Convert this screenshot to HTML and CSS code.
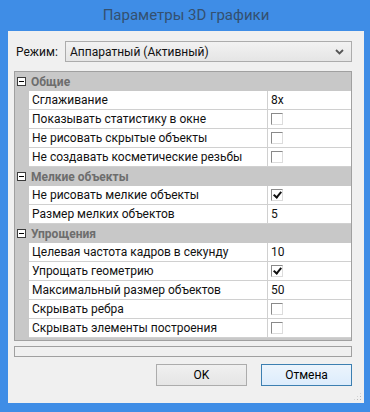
FILE: index.html
```html
<!DOCTYPE html>
<html lang="ru">
<head>
    <meta charset="UTF-8">
    <meta name="viewport" content="width=device-width, initial-scale=1.0">
    <title>Параметры 3D графики</title>
    <link rel="stylesheet" href="styles.css">
</head>
<body>
    <div class="window">
        <div class="title-bar">Параметры 3D графики</div>
        <div class="client">
            <div class="mode-row">
                <label class="mode-label" for="mode">Режим:</label>
                <div class="combo" id="mode">
                    <span>Аппаратный (Активный)</span>
                    <svg class="combo-arrow" width="9" height="6" viewBox="0 0 9 6">
                        <path d="M1 1 L4.5 4.5 L8 1" fill="none" stroke="#555" stroke-width="1.8"/>
                    </svg>
                </div>
            </div>

            <div class="prop-grid">
                <div class="pg-cat"><span class="toggle"></span><span class="cat-name">Общие</span></div>
                <div class="pg-row"><span class="pg-name">Сглаживание</span><span class="pg-value">8x</span></div>
                <div class="pg-row"><span class="pg-name">Показывать статистику в окне</span><span class="pg-value"><span class="check"></span></span></div>
                <div class="pg-row"><span class="pg-name">Не рисовать скрытые объекты</span><span class="pg-value"><span class="check"></span></span></div>
                <div class="pg-row"><span class="pg-name">Не создавать косметические резьбы</span><span class="pg-value"><span class="check"></span></span></div>

                <div class="pg-cat"><span class="toggle"></span><span class="cat-name">Мелкие объекты</span></div>
                <div class="pg-row"><span class="pg-name">Не рисовать мелкие объекты</span><span class="pg-value"><span class="check checked"></span></span></div>
                <div class="pg-row"><span class="pg-name">Размер мелких объектов</span><span class="pg-value">5</span></div>

                <div class="pg-cat"><span class="toggle"></span><span class="cat-name">Упрощения</span></div>
                <div class="pg-row"><span class="pg-name">Целевая частота кадров в секунду</span><span class="pg-value">10</span></div>
                <div class="pg-row"><span class="pg-name">Упрощать геометрию</span><span class="pg-value"><span class="check checked"></span></span></div>
                <div class="pg-row"><span class="pg-name">Максимальный размер объектов</span><span class="pg-value">50</span></div>
                <div class="pg-row"><span class="pg-name">Скрывать ребра</span><span class="pg-value"><span class="check"></span></span></div>
                <div class="pg-row"><span class="pg-name">Скрывать элементы построения</span><span class="pg-value"><span class="check"></span></span></div>
                <div class="pg-rest"></div>
            </div>

            <div class="help-box"></div>

            <div class="buttons">
                <button class="btn">OK</button>
                <button class="btn btn-default">Отмена</button>
            </div>
            <div class="grip"></div>
        </div>
    </div>
</body>
</html>
```

FILE: styles.css
```css
* { box-sizing: border-box; }
body {
    margin: 0;
    font-family: Roboto, "Noto Sans", sans-serif;
    font-size: 12px;
    color: #111;
}
.window {
    width: 370px;
    height: 412px;
    background: #3f8de6;
    padding: 0 6px 9px 8px;
    display: flex;
    flex-direction: column;
}
.title-bar {
    height: 31px;
    line-height: 31px;
    text-align: center;
    font-size: 15px;
    color: #34506f;
}
.client {
    flex: 1;
    background: #f0f0f0;
    padding: 10px 12px 0 6px;
    position: relative;
}
.mode-row {
    display: flex;
    align-items: center;
    height: 21px;
}
.mode-label {
    width: 51px;
    padding-left: 2px;
}
.combo {
    flex: 1;
    height: 21px;
    border: 1px solid #acacac;
    background: linear-gradient(#f2f2f2, #e5e5e5);
    display: flex;
    align-items: center;
    justify-content: space-between;
    padding: 0 7px 0 4px;
}
.prop-grid {
    margin-top: 9px;
    border: 1px solid #a0a0a0;
    height: 270px;
    background: #c8c8c8;
    display: flex;
    flex-direction: column;
}
.pg-cat {
    height: 19px;
    display: flex;
    align-items: center;
    background: #c8c8c8;
}
.toggle {
    width: 9px;
    height: 9px;
    margin: 0 5px 0 2px;
    border: 1px solid #3c3c3c;
    background: #fff;
    position: relative;
}
.toggle::after {
    content: "";
    position: absolute;
    left: 1px;
    right: 1px;
    top: 3px;
    height: 1px;
    background: #000;
}
.cat-name {
    font-weight: bold;
    color: #6d6d6d;
}
.pg-row {
    height: 19px;
    margin-left: 14px;
    display: flex;
    background: #fff;
    border-bottom: 1px solid #d0d0d0;
}
.pg-name {
    width: 239px;
    padding-left: 3px;
    border-right: 1px solid #d0d0d0;
    line-height: 18px;
    white-space: nowrap;
    overflow: hidden;
}
.pg-value {
    flex: 1;
    padding-left: 3px;
    line-height: 18px;
    display: flex;
    align-items: center;
}
.pg-rest {
    flex: 1;
}
.check {
    width: 12px;
    height: 12px;
    border-top: 1px solid #8a8a8a;
    border-left: 1px solid #8a8a8a;
    border-right: 1px solid #dcdcdc;
    border-bottom: 1px solid #dcdcdc;
    background: #fff;
    position: relative;
}
.check.checked::after {
    content: "";
    position: absolute;
    left: 3px;
    top: 0;
    width: 3px;
    height: 6px;
    border-right: 2px solid #111;
    border-bottom: 2px solid #111;
    transform: rotate(40deg);
}
.help-box {
    margin-top: 5px;
    height: 11px;
    border: 1px solid #a0a0a0;
    background: #f0f0f0;
}
.buttons {
    display: flex;
    justify-content: flex-end;
    gap: 14px;
    margin-top: 7px;
}
.btn {
    width: 91px;
    height: 22px;
    font-family: inherit;
    font-size: 12px;
    border: 1px solid #acacac;
    background: linear-gradient(#f0f0f0, #e5e5e5);
    color: #000;
}
.btn-default {
    border-color: #3c7fb1;
    background: linear-gradient(#ecf4fc, #dcecfc);
}
.grip {
    position: absolute;
    right: 2px;
    bottom: 2px;
    width: 9px;
    height: 9px;
    background: radial-gradient(circle, #b8b8b8 0.8px, transparent 1px) 0 0 / 3px 3px;
    clip-path: polygon(100% 0, 100% 100%, 0 100%);
}
```
